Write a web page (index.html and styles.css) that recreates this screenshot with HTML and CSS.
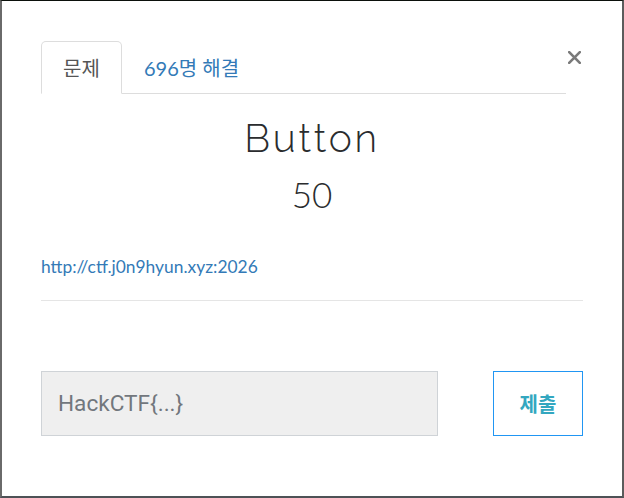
FILE: index.html
```html
<!DOCTYPE html>
<html lang="ko">
<head>
<meta charset="utf-8">
<title>Button</title>
<link rel="stylesheet" href="styles.css">
</head>
<body>
<div class="modal">
  <div class="modal-header">
    <ul class="tabs">
      <li class="tab active">문제</li>
      <li class="tab link">696명 해결</li>
    </ul>
    <button class="close" aria-label="닫기">
      <svg width="13" height="13" viewBox="0 0 13 13"><path d="M1.2 1.2 L11.8 11.8 M11.8 1.2 L1.2 11.8" stroke="#7a7a7a" stroke-width="2.6" stroke-linecap="square"/></svg>
    </button>
  </div>
  <h3 class="title">Button</h3>
  <h4 class="points">50</h4>
  <div class="desc"><a href="#">http://ctf.j0n9hyun.xyz:2026</a></div>
  <hr class="rule">
  <form class="submit-row">
    <input class="flag-input" type="text" placeholder="HackCTF{...}">
    <button class="submit-btn" type="button">제출</button>
  </form>
</div>
</body>
</html>
```

FILE: styles.css
```css
html, body {
  margin: 0;
  padding: 0;
  background: #ffffff;
}

.modal {
  box-sizing: border-box;
  width: 624px;
  height: 498px;
  border-top: 1px solid #0b100b;
  border-left: 2px solid #6a6a6a;
  border-right: 2px solid #5c5c5c;
  border-bottom: 2px solid #4e5256;
  padding: 40px 39px 0 39px;
  font-family: Lato, "Noto Sans CJK KR", sans-serif;
  color: #2b2b2b;
}

.modal-header {
  display: flex;
  align-items: flex-start;
}

.tabs {
  flex: 1;
  display: flex;
  list-style: none;
  margin: 0;
  padding: 0;
  border-bottom: 1px solid #dddddd;
  height: 52px;
}

.tab {
  box-sizing: border-box;
  height: 53px;
  display: flex;
  align-items: center;
  font-size: 20px;
  font-family: Lato, "Noto Sans CJK KR", sans-serif;
}

.tab.active {
  width: 81px;
  justify-content: center;
  border: 1px solid #dddddd;
  border-bottom-color: transparent;
  border-radius: 5px 5px 0 0;
  background: #fff;
  color: #555555;
  padding-bottom: 1px;
}

.tab.link {
  padding-left: 22px;
  color: #337ab7;
  padding-bottom: 1px;
}

.close {
  width: 17px;
  height: 17px;
  margin-top: 8px;
  padding: 0;
  border: 0;
  background: none;
  display: flex;
  align-items: center;
  justify-content: center;
}

.title {
  margin: 23px 0 0 0;
  text-align: center;
  font-family: Raleway, Lato, sans-serif;
  font-weight: 300;
  font-size: 39px;
  line-height: 43px;
  letter-spacing: 2.8px;
  color: #2a2c2e;
}

.points {
  margin: 17px 0 0 0;
  text-align: center;
  font-weight: 300;
  font-size: 35px;
  line-height: 35px;
  color: #2a2c2e;
}

.desc {
  margin-top: 43px;
  font-size: 17.4px;
  line-height: 23px;
}

.desc a {
  color: #337ab7;
  text-decoration: none;
}

.rule {
  margin: 22px 0 0 0;
  border: 0;
  border-top: 1px solid #e5e5e5;
  height: 0;
}

.submit-row {
  display: flex;
  justify-content: space-between;
  margin-top: 70px;
}

.flag-input {
  box-sizing: border-box;
  width: 397px;
  height: 65px;
  margin: 0;
  padding: 0 16px;
  background: #efefef;
  border: 1px solid #cfd3d7;
  border-radius: 0;
  font-family: Roboto, "Liberation Sans", sans-serif;
  font-size: 22.6px;
  color: #555;
  outline: none;
}

.flag-input::placeholder {
  color: #72777d;
}

.submit-btn {
  box-sizing: border-box;
  width: 90px;
  height: 65px;
  margin: 0;
  background: #fff;
  border: 1px solid #2196f3;
  border-radius: 0;
  font-family: "Noto Sans CJK KR", sans-serif;
  font-weight: 700;
  font-size: 20px;
  color: #33a7c0;
  padding: 0;
}
```
